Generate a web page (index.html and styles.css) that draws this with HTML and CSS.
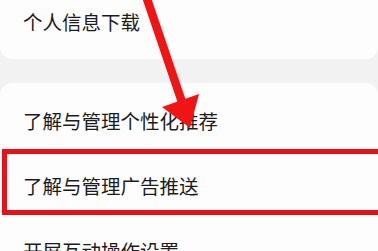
FILE: index.html
```html
<!DOCTYPE html>
<html lang="zh">
<head>
<meta charset="utf-8">
<link rel="stylesheet" href="styles.css">
</head>
<body>
<div class="page">
  <div class="card card-top">
    <div class="row row-first">个人信息下载</div>
  </div>
  <div class="card card-main">
    <div class="row">了解与管理个性化推荐</div>
    <div class="row">了解与管理广告推送</div>
    <div class="row">开屏互动操作设置</div>
  </div>
  <div class="highlight"></div>
  <svg class="arrow" width="378" height="251" viewBox="0 0 378 251">
    <line x1="146" y1="-4" x2="183" y2="105" stroke="#f01414" stroke-width="8.5" stroke-linecap="butt"/>
    <polygon points="162,107 199,94 190,128" fill="#f01414"/>
  </svg>
</div>
</body>
</html>
```
FILE: styles.css
```css
html, body {
  margin: 0;
  padding: 0;
}
body {
  background: #f2f2f3;
  font-family: "Noto Sans CJK SC", "Noto Sans", sans-serif;
  color: #1c1c1c;
  overflow: hidden;
}
.page {
  position: relative;
  width: 378px;
  height: 251px;
  overflow: hidden;
  display: flex;
  flex-direction: column;
  gap: 24px;
}
.card {
  background: #fdfdfd;
  border-radius: 12px;
}
.card-top {
  margin-top: -12px;
  padding: 22px 0 25px;
  height: 24px;
}
.card-main {
  padding-top: 5px;
  display: flex;
  flex-direction: column;
}
.row {
  height: 65px;
  display: flex;
  align-items: center;
  padding-left: 23px;
  font-size: 19.5px;
  line-height: 24px;
}
.row-first {
  height: 24px;
}
.highlight {
  position: absolute;
  left: 2px;
  top: 149px;
  width: 390px;
  height: 56px;
  border: 5px solid #e8111a;
}
.arrow {
  position: absolute;
  left: 0;
  top: 0;
}
```
